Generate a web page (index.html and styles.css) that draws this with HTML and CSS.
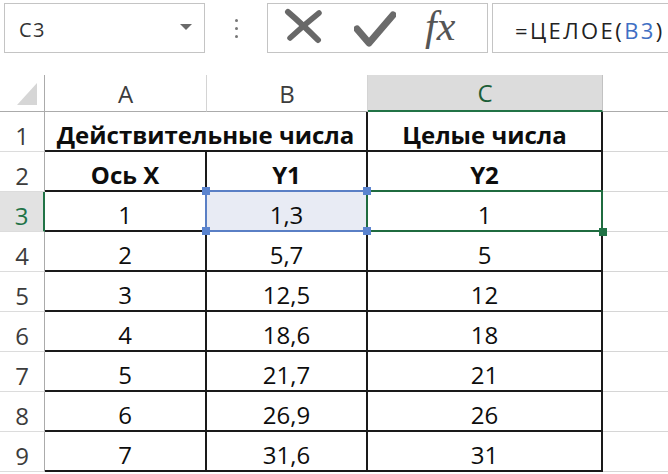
FILE: index.html
```html
<!DOCTYPE html>
<html lang="ru">
<head>
<meta charset="utf-8">
<title>Excel</title>
<link rel="stylesheet" href="styles.css">
</head>
<body>
<div class="toolbar">
  <div class="namebox">
    <span class="name">C3</span>
    <svg class="dd" width="12" height="6" viewBox="0 0 12 6"><polygon points="0,0 12,0 6,6" fill="#6a6a6a"/></svg>
  </div>
  <div class="dots"><i></i><i></i><i></i></div>
  <div class="fxbox">
    <svg class="ic-x" width="40" height="38" viewBox="0 0 40 38"><path d="M4 5 Q18 17 34 33" fill="none" stroke="#686868" stroke-width="6" stroke-linecap="round"/><path d="M35 6 Q20 18 6 31" fill="none" stroke="#686868" stroke-width="5.5" stroke-linecap="round"/></svg>
    <svg class="ic-ok" width="42" height="36" viewBox="0 0 42 36"><path d="M3 18 L15 32 L39 4" fill="none" stroke="#6b6b6b" stroke-width="7" stroke-linecap="round" stroke-linejoin="round"/></svg>
    <span class="fx">fx</span>
  </div>
  <div class="formula">=ЦЕЛОЕ(<span class="fref">B3</span>)</div>
</div>
<div class="sheet">
  <div class="corner"><svg width="20" height="22" viewBox="0 0 20 22"><polygon points="20,0 20,22 0,22" fill="#d6d6d6"/></svg></div>
  <div class="ch">A</div>
  <div class="ch">B</div>
  <div class="ch sel">C</div>
  <div class="ch blank"></div>

  <div class="rh">1</div>
  <div class="c bold wide">Действительные числа</div>
  <div class="c bold">Целые числа</div>
  <div class="g"></div>

  <div class="rh">2</div>
  <div class="c bold">Ось X</div>
  <div class="c bold">Y1</div>
  <div class="c bold">Y2</div>
  <div class="g"></div>

  <div class="rh sel">3</div>
  <div class="c">1</div>
  <div class="c ref">1,3<span class="h tl"></span><span class="h tr"></span><span class="h bl"></span><span class="h br"></span></div>
  <div class="c active">1<span class="fill"></span></div>
  <div class="g"></div>

  <div class="rh">4</div>
  <div class="c">2</div>
  <div class="c">5,7</div>
  <div class="c">5</div>
  <div class="g"></div>

  <div class="rh">5</div>
  <div class="c">3</div>
  <div class="c">12,5</div>
  <div class="c">12</div>
  <div class="g"></div>

  <div class="rh">6</div>
  <div class="c">4</div>
  <div class="c">18,6</div>
  <div class="c">18</div>
  <div class="g"></div>

  <div class="rh">7</div>
  <div class="c">5</div>
  <div class="c">21,7</div>
  <div class="c">21</div>
  <div class="g"></div>

  <div class="rh">8</div>
  <div class="c">6</div>
  <div class="c">26,9</div>
  <div class="c">26</div>
  <div class="g"></div>

  <div class="rh">9</div>
  <div class="c">7</div>
  <div class="c">31,6</div>
  <div class="c">31</div>
  <div class="g"></div>
</div>
</body>
</html>
```
FILE: styles.css
```css
* { box-sizing: border-box; }
html, body { margin: 0; padding: 0; }
body {
  width: 668px;
  height: 474px;
  overflow: hidden;
  background: #fff;
  font-family: "Open Sans", "Noto Sans", sans-serif;
}

.toolbar {
  display: flex;
  height: 75px;
  padding-top: 3px;
}
.namebox {
  margin-left: 4px;
  width: 201px;
  height: 50px;
  border: 1px solid #c4c4c4;
  display: flex;
  align-items: center;
  justify-content: space-between;
  padding: 3px 12px 0 14px;
}
.name {
  font-size: 20px;
  color: #333;
  letter-spacing: 1.5px;
}
.dd { margin-top: -6px; }
.dots {
  width: 62px;
  height: 50px;
  display: flex;
  flex-direction: column;
  align-items: center;
  justify-content: center;
  gap: 5px;
}
.dots i {
  display: block;
  width: 3px;
  height: 3px;
  border-radius: 50%;
  background: #777;
}
.fxbox {
  width: 221px;
  height: 50px;
  border: 1px solid #c4c4c4;
  display: flex;
  align-items: center;
  padding-left: 16px;
}
.ic-x { margin-top: -4px; }
.ic-ok { margin-left: 30px; margin-top: 2px; }
.fx {
  margin-left: 29px;
  font-family: "Liberation Serif", serif;
  font-style: italic;
  font-size: 42px;
  color: #555;
  margin-top: -4px;
}
.formula {
  margin-left: 4px;
  flex: 1;
  height: 50px;
  border: 1px solid #c4c4c4;
  border-right: none;
  display: flex;
  align-items: center;
  padding: 3px 0 0 22px;
  font-size: 22px;
  color: #222;
  letter-spacing: 2.4px;
  white-space: nowrap;
}
.fref { color: #3f6fc4; }

.sheet {
  display: grid;
  grid-template-columns: 45px 162px 161px 235px 65px;
  grid-template-rows: 37px repeat(9, 40px);
}
.corner {
  border-right: 1px solid #ababab;
  border-bottom: 1px solid #ababab;
  display: flex;
  justify-content: flex-end;
  align-items: flex-end;
  padding: 0 7px 6px 0;
}
.ch {
  display: flex;
  align-items: center;
  justify-content: center;
  font-size: 24px;
  color: #3c3c3c;
  border-right: 1px solid #d4d4d4;
  border-bottom: 1px solid #ababab;
}
.ch.sel {
  background: #dcdcdc;
  color: #1b5e37;
  border-bottom: 2px solid #217346;
  border-right-color: #c2c2c2;
}
.ch.blank { border-right: none; }

.rh {
  display: flex;
  align-items: center;
  justify-content: center;
  font-size: 24px;
  color: #3c3c3c;
  padding-top: 7px;
  border-right: 1px solid #ababab;
  border-bottom: 1px solid #dcdcdc;
}
.rh.sel {
  background: #e2e2e2;
  color: #217346;
  border-right: 2px solid #217346;
}

.c {
  display: flex;
  align-items: center;
  justify-content: center;
  font-size: 24px;
  color: #0d0d0d;
  padding-top: 7px;
  border-right: 2px solid #1a1a1a;
  border-bottom: 2px solid #1a1a1a;
  white-space: nowrap;
}
.bold { font-weight: 700; }
.wide { grid-column: span 2; }
.g { border-bottom: 1px solid #d6d6d6; }

.ref {
  position: relative;
  background: #e8ebf4;
}
.ref::after {
  content: "";
  position: absolute;
  left: -2px;
  top: -2px;
  right: -2px;
  bottom: -2px;
  border: 2px solid #5a7fc5;
  z-index: 1;
}
.h {
  position: absolute;
  width: 8px;
  height: 8px;
  background: #5b84cf;
  z-index: 4;
}
.h.tl { left: -5px; top: -5px; }
.h.bl { left: -5px; bottom: -5px; }
.h.tr { right: -5px; top: -5px; }
.h.br { right: -5px; bottom: -5px; }

.active { position: relative; }
.active::after {
  content: "";
  position: absolute;
  left: -2px;
  top: -2px;
  right: -2px;
  bottom: -2px;
  border: 2px solid #1f6b3f;
  z-index: 2;
}
.fill {
  position: absolute;
  right: -6px;
  bottom: -6px;
  width: 8px;
  height: 8px;
  background: #217346;
  z-index: 3;
}
```
